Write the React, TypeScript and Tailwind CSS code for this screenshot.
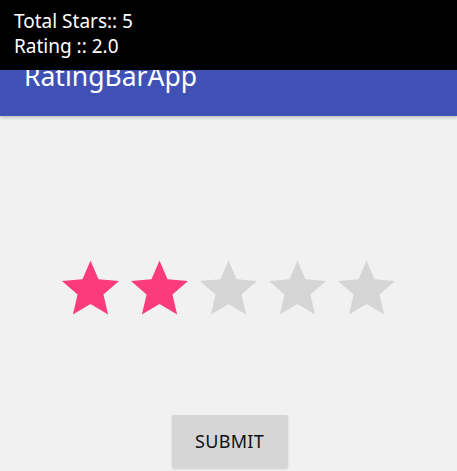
const STAR = "M12 17.27L18.18 21l-1.64-7.03L22 9.24l-7.19-.61L12 2 9.19 8.63 2 9.24l5.46 4.73L5.82 21z";

function Star({ filled }: { filled: boolean }) {
  return (
    <svg viewBox="2 2 20 19" className="h-[55px] w-[57px]">
      <path d={STAR} fill={filled ? "#fb3b7c" : "#d5d5d5"} />
    </svg>
  );
}

export default function App() {
  const rating = 2;
  return (
    <div
      className="relative h-[471px] w-[457px] overflow-hidden bg-[#f1f1f1]"
      style={{ fontFamily: '"Noto Sans", "Open Sans", sans-serif' }}
    >
      <div className="h-[59px] bg-[#303f9f]" />
      <header className="h-[56px] bg-[#3f51b5] px-6 shadow-[0_2px_3px_rgba(0,0,0,0.2)]">
        <h1 className="mt-[1px] text-[26.5px] leading-[32px] text-white">RatingBarApp</h1>
      </header>

      <div className="mt-[144px] flex justify-center gap-[12px]">
        {[1, 2, 3, 4, 5].map((i) => (
          <Star key={i} filled={i <= rating} />
        ))}
      </div>

      <div className="mt-[100px] flex justify-center">
        <button className="ml-[2px] h-[53px] w-[116px] rounded-[2px] bg-[#d6d6d6] text-[18px] tracking-[0.3px] text-[#111] shadow-[0_1px_2px_rgba(0,0,0,0.15)]">
          SUBMIT
        </button>
      </div>

      <div className="absolute left-0 right-0 top-0 h-[70px] bg-black px-[14px] pt-[9px] text-[19px] leading-[25px] text-white">
        <p>Total Stars:: 5</p>
        <p>Rating :: 2.0</p>
      </div>
    </div>
  );
}
